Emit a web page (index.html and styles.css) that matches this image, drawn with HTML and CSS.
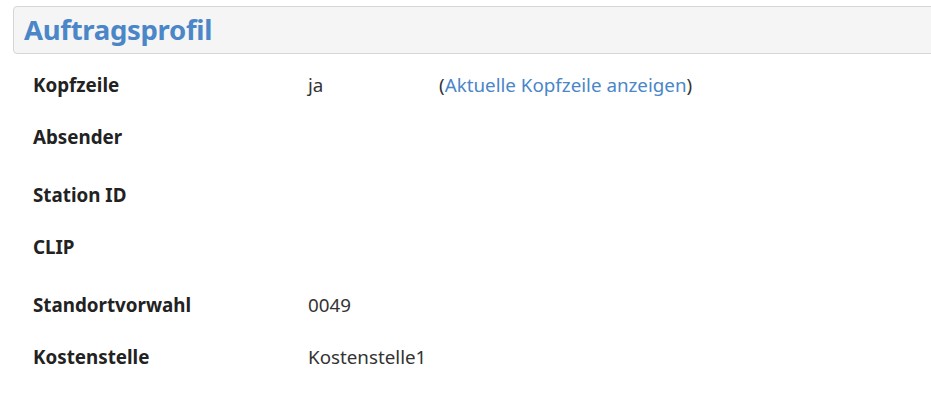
FILE: index.html
```html
<!DOCTYPE html>
<html lang="de">
<head>
<meta charset="utf-8">
<title>Auftragsprofil</title>
<link rel="stylesheet" href="styles.css">
</head>
<body>
<div class="panel-heading"><h1 class="title">Auftragsprofil</h1></div>
<div class="rows">
  <div class="row"><div class="label">Kopfzeile</div><div class="value">ja</div><div class="extra">(<a href="#">Aktuelle Kopfzeile anzeigen</a>)</div></div>
  <div class="row tall"><div class="label">Absender</div><div class="value"></div></div>
  <div class="row"><div class="label">Station ID</div><div class="value"></div></div>
  <div class="row tall"><div class="label">CLIP</div><div class="value"></div></div>
  <div class="row"><div class="label">Standortvorwahl</div><div class="value">0049</div></div>
  <div class="row"><div class="label">Kostenstelle</div><div class="value">Kostenstelle1</div></div>
</div>
</body>
</html>
```
FILE: styles.css
```css
html, body { margin: 0; padding: 0; background: #fff; overflow: hidden; }
body { font-family: "Noto Sans", "Open Sans", sans-serif; color: #333; }
.panel-heading {
  margin: 6px -10px 0 13px;
  height: 46px;
  border: 1px solid #d6d6d6;
  border-radius: 4px;
  background: #f5f5f5;
  display: flex;
  align-items: center;
  padding-left: 10px;
}
.title { margin: 0; font-size: 27.5px; font-weight: 700; color: #4a86c8; line-height: 1; letter-spacing: -0.3px; }
.rows { display: flex; flex-direction: column; padding: 19px 0 0 33px; }
.row { display: flex; align-items: flex-start; height: 51.5px; font-size: 18.8px; line-height: 24px; }
.row.tall { height: 58.5px; }
.label { width: 275px; font-weight: 700; color: #222; }
.value { width: 131px; }
.extra a { color: #4a86c8; text-decoration: none; }
```
